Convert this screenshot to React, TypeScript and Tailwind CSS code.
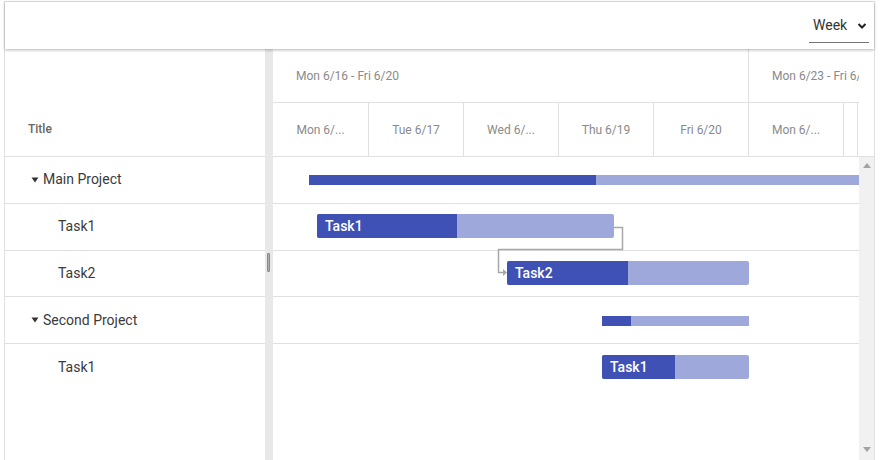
import React from "react";

type Row = {
  title: string;
  level: 0 | 1;
  summary?: boolean;
  left: number;
  width: number;
  done: number;
};

const rows: Row[] = [
  { title: "Main Project", level: 0, summary: true, left: 36, width: 560, done: 287 },
  { title: "Task1", level: 1, left: 44, width: 297, done: 140 },
  { title: "Task2", level: 1, left: 234, width: 242, done: 121 },
  { title: "Second Project", level: 0, summary: true, left: 329, width: 147, done: 29 },
  { title: "Task1", level: 1, left: 329, width: 147, done: 73 },
];

const days = ["Mon 6/...", "Tue 6/17", "Wed 6/...", "Thu 6/19", "Fri 6/20", "Mon 6/..."];

function Caret() {
  return (
    <svg width="8" height="6" viewBox="0 0 8 6" className="mr-[4px] shrink-0">
      <path d="M0.5 0.5h7L4 5.5z" fill="#333" />
    </svg>
  );
}

function Bar({ row }: { row: Row }) {
  if (row.summary) {
    return (
      <div
        className="flex h-[10px] shrink-0 bg-[#9fa8da]"
        style={{ marginLeft: row.left, width: row.width }}
      >
        <div className="h-full bg-[#3f51b5]" style={{ width: row.done }} />
      </div>
    );
  }
  return (
    <div
      className="relative flex h-[24px] shrink-0 overflow-hidden rounded-[2px] bg-[#9fa8da]"
      style={{ marginLeft: row.left, width: row.width }}
    >
      <div className="h-full bg-[#3f51b5]" style={{ width: row.done }} />
      <span className="absolute left-[8px] top-0 text-[14px] leading-[24px] font-medium text-white">
        {row.title}
      </span>
    </div>
  );
}

export default function App() {
  return (
    <div className="h-[460px] w-[880px] overflow-hidden bg-white font-['Roboto',sans-serif]">
      <div className="ml-[4px] mt-px flex h-[480px] w-[871px] flex-col border border-[#e0e0e0]">
        {/* toolbar */}
        <div className="relative z-10 flex h-[47px] shrink-0 items-start justify-end bg-white pr-[5px] shadow-[0_1px_3px_rgba(0,0,0,0.3)]">
          <div className="mt-[14px] flex h-[27px] w-[60px] items-start justify-between border-b border-[#757575] pl-[4px] pr-[2px]">
            <span className="text-[14px] leading-[18px] text-[#333]">Week</span>
            <svg width="10" height="8" viewBox="0 0 10 8" className="mt-[6px]">
              <path d="M1.5 2l3.5 3.5L8.5 2" fill="none" stroke="#222" strokeWidth="2" />
            </svg>
          </div>
        </div>

        <div className="flex min-h-0 flex-1">
          {/* left grid */}
          <div className="flex w-[260px] shrink-0 flex-col">
            <div className="flex h-[108px] shrink-0 items-end border-b border-[#e0e0e0]">
              <div className="flex h-[54px] items-center pl-[23px] text-[12px] font-medium text-[#666]">
                Title
              </div>
            </div>
            {rows.map((r, i) => (
              <div
                key={i}
                className={`flex h-[46.75px] shrink-0 items-center text-[14px] text-[#3a3a3a] ${
                  i < rows.length - 1 ? "border-b border-[#e0e0e0]" : ""
                } ${r.level === 0 ? "pl-[26px]" : "pl-[53px]"}`}
              >
                {r.level === 0 && <Caret />}
                {r.title}
              </div>
            ))}
          </div>

          {/* splitter */}
          <div className="relative w-[8px] shrink-0 bg-[#e8e8e8]">
            <div className="absolute left-[2px] top-[204px] h-[19px] w-[3px] rounded-[1px] border border-[#8a8a8a] bg-[#b0b0b0]" />
          </div>

          {/* timeline */}
          <div className="flex min-w-0 flex-1 flex-col">
            <div className="flex h-[108px] shrink-0 border-b border-[#e0e0e0]">
              <div className="flex min-w-0 flex-1 flex-col overflow-hidden">
                <div className="flex h-[54px] shrink-0 border-b border-[#e0e0e0] text-[12px] text-[#8a8a8a]">
                  <div className="flex w-[476px] shrink-0 items-center border-r border-[#e0e0e0] pl-[23px]">
                    Mon 6/16 - Fri 6/20
                  </div>
                  <div className="flex flex-1 items-center overflow-hidden whitespace-nowrap pl-[23px]">
                    Mon 6/23 - Fri 6/
                  </div>
                </div>
                <div className="flex h-[53px] shrink-0 text-[12px] text-[#8a8a8a]">
                  {days.map((d, i) => (
                    <div
                      key={i}
                      className={`flex shrink-0 items-center justify-center border-r border-[#e0e0e0] ${
                        i === 0 ? "w-[96px]" : "w-[95px]"
                      }`}
                    >
                      {d}
                    </div>
                  ))}
                  <div className="w-[14px] shrink-0 border-r border-[#e0e0e0]" />
                </div>
              </div>
              <div className="w-[15px] shrink-0" />
            </div>

            <div className="flex min-h-0 flex-1">
              <div className="relative min-w-0 flex-1 overflow-hidden">
                {rows.map((r, i) => (
                  <div
                    key={i}
                    className={`flex h-[46.75px] items-center ${
                      i < rows.length - 1 ? "border-b border-[#e0e0e0]" : ""
                    } ${r.summary ? "pt-[1px]" : "pb-[1px]"}`}
                  >
                    <Bar row={r} />
                  </div>
                ))}
                <svg
                  className="absolute left-0 top-0"
                  width="400"
                  height="140"
                  viewBox="0 0 400 140"
                >
                  <path
                    d="M341 70.5H349.5V92.5H225.5V115.5H231"
                    fill="none"
                    stroke="#a8a8a8"
                    strokeWidth="1.5"
                  />
                  <path d="M230 112l4 3.5l-4 3.5z" fill="#a8a8a8" />
                </svg>
              </div>
              {/* scrollbar */}
              <div className="flex w-[15px] shrink-0 flex-col items-center bg-[#f1f1f1] pt-[6px]">
                <svg width="8" height="5" viewBox="0 0 8 5">
                  <path d="M0 5L4 0l4 5z" fill="#a3a3a3" />
                </svg>
                <div className="mt-[279px]">
                  <svg width="8" height="5" viewBox="0 0 8 5">
                    <path d="M0 0h8L4 5z" fill="#a3a3a3" />
                  </svg>
                </div>
              </div>
            </div>
          </div>
        </div>
      </div>
    </div>
  );
}
